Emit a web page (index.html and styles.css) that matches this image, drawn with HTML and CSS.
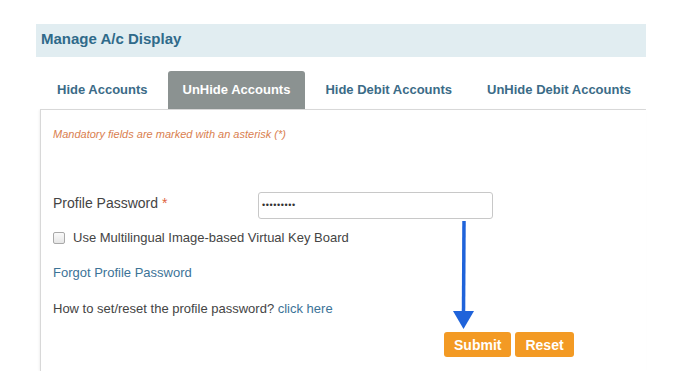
FILE: index.html
```html
<!DOCTYPE html>
<html>
<head>
<meta charset="utf-8">
<link rel="stylesheet" href="styles.css">
</head>
<body>
<div class="page">
  <div class="header">Manage A/c Display</div>
  <div class="tabs">
    <div class="tab">Hide Accounts</div>
    <div class="tab active">UnHide Accounts</div>
    <div class="tab">Hide Debit Accounts</div>
    <div class="tab">UnHide Debit Accounts</div>
  </div>
  <div class="panel">
    <p class="mandatory">Mandatory fields are marked with an asterisk (*)</p>
    <div class="field">
      <label class="label">Profile Password <span class="req">*</span></label>
      <div class="input">&bull;&bull;&bull;&bull;&bull;&bull;&bull;&bull;&bull;</div>
    </div>
    <div class="check-row">
      <span class="checkbox"></span>
      <span>Use Multilingual Image-based Virtual Key Board</span>
    </div>
    <a class="link forgot">Forgot Profile Password</a>
    <p class="howto">How to set/reset the profile password? <a class="link">click here</a></p>
    <div class="actions">
      <button class="btn">Submit</button>
      <button class="btn">Reset</button>
    </div>
    <svg class="arrow" width="24" height="112" viewBox="0 0 24 112">
      <line x1="12" y1="0" x2="11.5" y2="94" stroke="#1f63da" stroke-width="3.5"/>
      <polygon points="1,90 22,90 11.5,108" fill="#1f63da"/>
    </svg>
  </div>
</div>
</body>
</html>
```

FILE: styles.css
```css
* { box-sizing: border-box; }
body {
  margin: 0;
  background: #fff;
  font-family: "Liberation Sans", Arial, sans-serif;
  color: #444;
}
.page {
  padding: 24px 53px 0 36px;
}
.header {
  height: 33px;
  background: #e1edf1;
  color: #2f6a8a;
  font-weight: bold;
  font-size: 15px;
  line-height: 30px;
  padding-left: 5px;
}
.tabs {
  display: flex;
  gap: 5px;
  margin: 14px 0 0 4px;
  padding-left: 2px;
  border-bottom: 1px solid #dcdcdc;
}
.tab {
  height: 38px;
  line-height: 38px;
  padding: 0 15px;
  font-size: 13px;
  font-weight: bold;
  color: #3b6b87;
  border-radius: 3px 3px 0 0;
}
.tab.active {
  background: #8b9291;
  color: #fff;
}
.panel {
  position: relative;
  margin-left: 4px;
  height: 261px;
  border-left: 1px solid #d8d8d8;
  box-shadow: -1px 0 2px rgba(0,0,0,0.06);
  padding: 18px 0 0 12px;
}
.mandatory {
  margin: 0;
  font-size: 11px;
  font-style: italic;
  color: #d9804f;
}
.field {
  display: flex;
  align-items: center;
  margin-top: 52px;
}
.label {
  width: 205px;
  font-size: 14px;
  color: #444;
  padding-bottom: 5px;
}
.req { color: #e0633d; }
.input {
  width: 235px;
  height: 27px;
  border: 1px solid #c8c8c8;
  border-radius: 3px;
  font-size: 9px;
  line-height: 25px;
  padding-left: 3px;
  color: #333;
  letter-spacing: 0.6px;
}
.check-row {
  display: flex;
  align-items: center;
  gap: 8px;
  margin-top: 11px;
  font-size: 13px;
  color: #444;
}
.checkbox {
  width: 12px;
  height: 12px;
  border: 1px solid #a9a9a9;
  border-radius: 2px;
  background: linear-gradient(#fafafa, #e6e6e6);
}
.link {
  color: #3c7397;
  text-decoration: none;
}
.forgot {
  display: block;
  margin-top: 20px;
  font-size: 13px;
}
.howto {
  margin: 21px 0 0;
  font-size: 13px;
}
.actions {
  display: flex;
  gap: 4px;
  margin: 16px 0 0 391px;
}
.btn {
  height: 25px;
  border: none;
  border-radius: 3px;
  background: #f39a24;
  color: #fff;
  font-family: "Liberation Sans", Arial, sans-serif;
  font-weight: bold;
  font-size: 14px;
  padding: 0 10px;
}
.arrow {
  position: absolute;
  left: 411px;
  top: 111px;
}
```
